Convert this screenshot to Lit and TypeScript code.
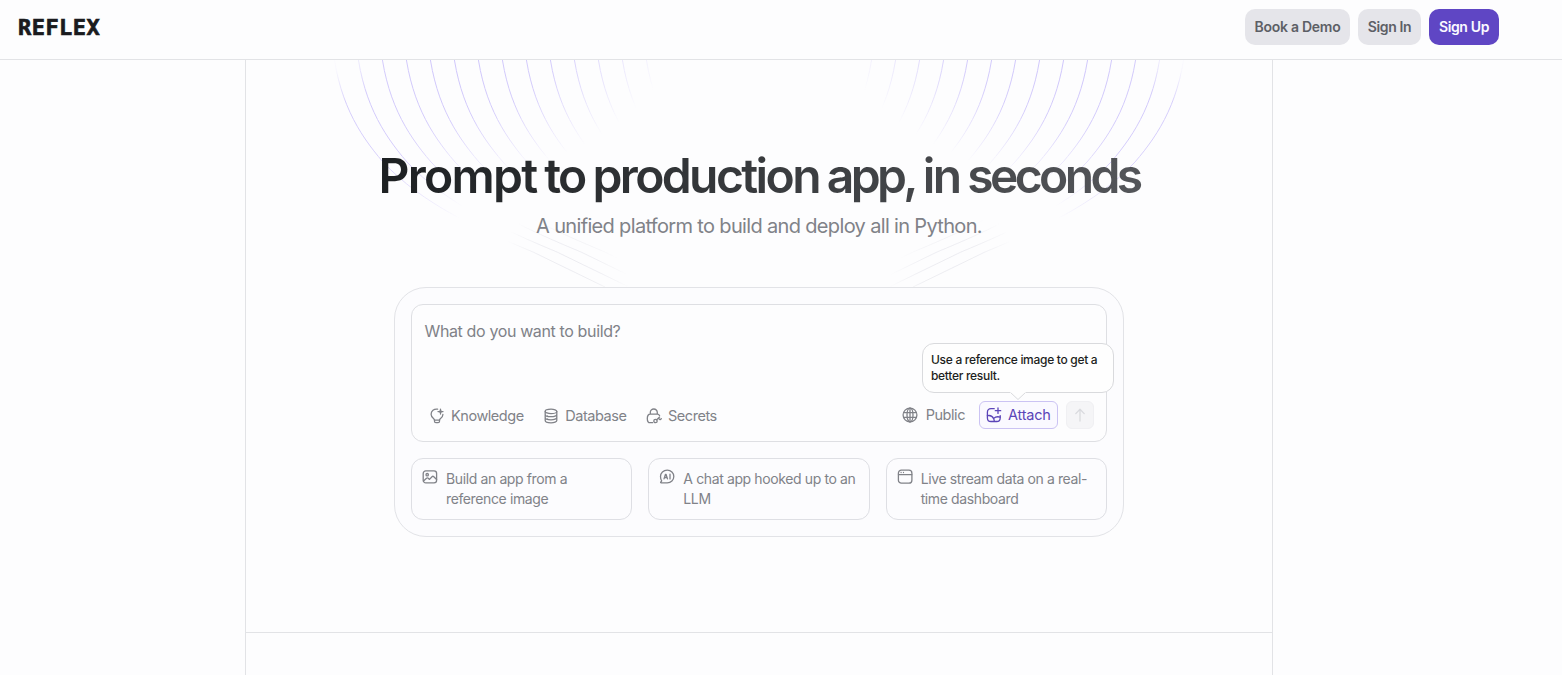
import { LitElement, html, css, svg } from "lit";
import { customElement } from "lit/decorators.js";

const icon = (body: unknown) => html`<svg class="icon" viewBox="0 0 16 16" width="16" height="16">${body}</svg>`;

const icons = {
  bulb: icon(svg`
    <path d="M8.6 1.2C4.9.7 2.100 3 2.100 6.200c0 2.100 1.100 3.400 2.600 4.600.5.4.7.8.7 1.300h5.200c0-.5.2-.9.7-1.300 1.500-1.200 2.600-2.500 2.600-4.400"/>
    <path d="M5.500 12.200v1c0 .9.6 1.500 1.400 1.500h2.200c.8 0 1.400-.6 1.400-1.500v-1"/>
    <path d="M11.500 1.100v5M9 3.600h5M11.500 2.400l1.200 1.200-1.200 1.200-1.200-1.200z"/>`),
  database: icon(svg`
    <ellipse cx="8" cy="3.400" rx="5.800" ry="2.200"/>
    <path d="M2.200 3.400v9.200c0 1.200 2.600 2.200 5.800 2.200s5.800-1 5.800-2.200V3.400M2.200 6.500c0 1.200 2.600 2.200 5.800 2.200s5.800-1 5.800-2.200M2.200 9.600c0 1.200 2.600 2.200 5.800 2.200s5.800-1 5.800-2.200M4.600 7.900v.1M4.600 11v.1"/>`),
  lock: icon(svg`
    <path d="M4.300 6.200V4.500a3.500 3.500 0 0 1 7 0v1.700M13.600 7.700c-.4-.9-1.100-1.500-2.300-1.500H4.300C2.400 6.200 1.300 7.900 1.300 10.400s.8 4.300 2.800 4.300h2.500"/>
    <circle cx="9.500" cy="13" r="1.700"/>
    <path d="M10.700 11.800l2.900-2.700M12.400 10.200l1.700 1.500 1.200-1"/>`),
  globe: icon(svg`
    <circle cx="8" cy="8" r="6.900"/><ellipse cx="8" cy="8" rx="3" ry="6.900"/>
    <path d="M1.600 5.600h12.800M1.600 10.400h12.800M8 1.100v13.800"/>`),
  addImage: icon(svg`
    <path d="M8.200 1.700H5C2.600 1.700 1.400 2.900 1.400 5.300v5.600c0 2.400 1.200 3.600 3.600 3.600h5.600c2.400 0 3.600-1.200 3.600-3.600V8.600"/>
    <path d="M1.400 8.700c2.800-.7 5.100.5 6.300 3 .3.700.5 1.600.6 2.600M7.600 11.400c1.900-1.700 4.200-2 6.600-1.300"/>
    <path d="M12 1v5.400M9.300 3.700h5.400"/>`),
  arrow: icon(svg`<path d="M8 14V2.500M3.800 6.600L8 2.300l4.200 4.300"/>`),
  image: icon(svg`
    <rect x="1.200" y="1.900" width="13.400" height="12" rx="2.600"/><circle cx="5.200" cy="5.700" r="1.200"/>
    <path d="M1.500 12l3-2.700c.6-.5 1.200-.5 1.800 0l1.200 1.100 2.500-2.700c.6-.6 1.200-.6 1.800 0l2.800 2.800"/>`),
  chat: icon(svg`
    <path d="M8.200 1.100c3.800 0 6.600 2.800 6.600 6.400s-2.800 6.400-6.600 6.400H2.200c-.6 0-.8-.5-.4-.9l.9-1.200C1.900 10.700 1.500 9.300 1.500 7.500c0-3.600 2.900-6.400 6.700-6.400z"/>
    <path d="M5 9.900l1.500-4.600h.5l1.500 4.600M5.500 8.500h2.500M11 5.200v4.700"/>`),
  browser: icon(svg`
    <rect x="1.400" y="1.200" width="13.500" height="13" rx="3"/><path d="M1.500 5.700h13.300M4.100 3.500v.1M6.500 3.500v.1"/>`),
};

const ARC = "M332 40C337 99 358 133 383 162C422 204 480 230 533 252L605 287";
const arcs = Array.from({ length: 14 }, (_, i) => i * 24);

const tools = [
  { icon: icons.bulb, label: "Knowledge" },
  { icon: icons.database, label: "Database" },
  { icon: icons.lock, label: "Secrets" },
];

const examples = [
  { icon: icons.image, label: "Build an app from a reference image" },
  { icon: icons.chat, label: "A chat app hooked up to an LLM" },
  { icon: icons.browser, label: "Live stream data on a real-time dashboard" },
];

@customElement("app-root")
class AppRoot extends LitElement {
  static styles = css`
    :host {
      display: block;
      height: 675px;
      overflow: hidden;
      background: #fdfdfe;
      color: #808288;
      font-family: Inter, "Liberation Sans", sans-serif;
    }
    * { box-sizing: border-box; }
    .page { display: flex; flex-direction: column; height: 100%; }
    .header {
      display: flex;
      flex: none;
      align-items: center;
      justify-content: space-between;
      height: 60px;
      padding: 0 63px 5px 18px;
      border-bottom: 1px solid #e2e3e6;
    }
    .logo {
      padding-top: 1px;
      font: 700 22px/24px "DejaVu Sans Mono", monospace;
      letter-spacing: 0.45px;
      color: #1a1b1e;
      -webkit-text-stroke: 0.7px #1a1b1e;
    }
    .nav { display: flex; gap: 8px; }
    .btn {
      display: flex;
      align-items: center;
      justify-content: center;
      height: 36px;
      padding-bottom: 2px;
      border-radius: 10px;
      background: #e5e5ea;
      color: #5d5f66;
      font-size: 14px;
      font-weight: 600;
      letter-spacing: -0.35px;
      white-space: nowrap;
    }
    .demo { width: 105px; letter-spacing: -0.28px; }
    .signin { width: 63px; }
    .signup { width: 70px; background: #5f46c4; color: #fbfaff; }
    .frame {
      flex: 1;
      width: 1028px;
      margin-left: 245px;
      border: solid #e2e3e6;
      border-width: 0 1px;
    }
    .hero {
      position: relative;
      display: flex;
      flex-direction: column;
      align-items: center;
      height: 573px;
      padding-top: 92px;
      border-bottom: 1px solid #e2e3e6;
    }
    .arcs { position: absolute; left: 0; top: 0; }
    .arcs path { fill: none; stroke: #cfc6fb; stroke-width: 1; }
    .arcs .low path { stroke: #ebebf0; }
    .title {
      position: relative;
      margin: 0;
      padding: 0 4px;
      font-size: 48px;
      line-height: 48px;
      height: 60px;
      font-weight: 600;
      letter-spacing: -2.6px;
      word-spacing: -1.8px;
      white-space: nowrap;
      color: transparent;
      background: linear-gradient(95deg, #1c1f21, #54565a);
      background-clip: text;
      -webkit-background-clip: text;
    }
    .loose { letter-spacing: -1.7px; }
    .snug { letter-spacing: -3.6px; }
    .subtitle {
      position: relative;
      margin: 0 0 47px;
      font-size: 20px;
      line-height: 28px;
      font-weight: 420;
      letter-spacing: -0.66px;
      white-space: nowrap;
    }
    .prompt {
      position: relative;
      display: flex;
      flex-direction: column;
      gap: 16px;
      width: 730px;
      height: 250px;
      padding: 16px;
      border: 1px solid #e2e3e7;
      border-radius: 32px;
      background: #fcfcfe;
    }
    .box {
      display: flex;
      flex-direction: column;
      justify-content: space-between;
      height: 138px;
      padding: 14px 12px 12px;
      border: 1px solid #dedfe3;
      border-radius: 12px;
      background: #fdfdfe;
    }
    .placeholder { font-size: 16px; line-height: 24px; letter-spacing: -0.37px; padding-left: 0.5px; }
    .bar { display: flex; align-items: center; height: 28px; font-size: 14.5px; letter-spacing: -0.45px; }
    .tools { display: flex; gap: 19.5px; padding: 1px 0 0 5px; }
    .tool { display: flex; align-items: center; gap: 6px; }
    .actions { display: flex; align-items: center; margin-left: auto; }
    .public { display: flex; align-items: center; gap: 8px; margin-right: 14px; }
    .label { padding-bottom: 1.5px; }
    .attach {
      position: relative;
      display: flex;
      align-items: center;
      gap: 6px;
      width: 79px;
      height: 28px;
      padding-left: 6px;
      border: 1px solid #cbc3f3;
      border-radius: 6px;
      background: #faf9ff;
      color: #5b45b8;
      letter-spacing: -0.2px;
    }
    .send {
      display: grid;
      place-items: center;
      width: 28px;
      height: 28px;
      margin-left: 8px;
      border: 1px solid #f0f0f3;
      border-radius: 6px;
      background: #f5f5f7;
      color: #d9dade;
    }
    .tip {
      position: absolute;
      left: -58px;
      top: -59px;
      width: 192px;
      height: 50px;
      padding: 8px;
      border: 1px solid #d9dadd;
      border-radius: 12px;
      background: #fefefe;
      color: #1d1e21;
      font-size: 12px;
      line-height: 16px;
      font-weight: 500;
      letter-spacing: -0.3px;
    }
    .point { position: absolute; left: 87px; top: 48px; fill: #fefefe; stroke: #d9dadd; }
    .cards { display: grid; grid-template-columns: repeat(3, 1fr); gap: 16px; height: 62px; }
    .card {
      display: flex;
      gap: 8px;
      padding: 10px 11px 10px 10px;
      border: 1px solid #dedfe4;
      border-radius: 12px;
      font-size: 14px;
      line-height: 20px;
      letter-spacing: -0.38px;
    }
    .icon { flex: none; fill: none; stroke: currentColor; stroke-width: 1.3; stroke-linecap: round; stroke-linejoin: round; }
    .card .icon { stroke-width: 1.3; }
  `;

  render() {
    const set = arcs.map((x) => svg`<path d=${ARC} transform="translate(${x} 0)"/>`);
    return html`
      <div class="page">
        <header class="header">
          <div class="logo">REFLEX</div>
          <nav class="nav">
            <div class="btn demo">Book a Demo</div>
            <div class="btn signin">Sign In</div>
            <div class="btn signup">Sign Up</div>
          </nav>
        </header>
        <main class="frame">
          <section class="hero">
            <svg class="arcs" viewBox="246 60 1026 228" width="1026" height="228">
              <defs>
                <radialGradient id="fade" gradientUnits="userSpaceOnUse" cx="0" cy="0" r="1"
                  gradientTransform="translate(458 66) rotate(-14) scale(228 120)">
                  <stop offset="0" stop-color="#fff"/>
                  <stop offset=".45" stop-color="#fff" stop-opacity=".9"/>
                  <stop offset="1" stop-color="#fff" stop-opacity="0"/>
                </radialGradient>
                <radialGradient id="fade2" gradientUnits="userSpaceOnUse" cx="0" cy="0" r="1"
                  gradientTransform="translate(388 150) rotate(46) scale(100 38)">
                  <stop offset="0" stop-color="#fff" stop-opacity=".9"/>
                  <stop offset="1" stop-color="#fff" stop-opacity="0"/>
                </radialGradient>
                <radialGradient id="corner" gradientUnits="userSpaceOnUse" cx="330" cy="50" r="55">
                  <stop offset="0" stop-color="#000"/>
                  <stop offset=".4" stop-color="#000" stop-opacity=".85"/>
                  <stop offset="1" stop-color="#000" stop-opacity="0"/>
                </radialGradient>
                <radialGradient id="fadeLow" gradientUnits="userSpaceOnUse" cx="0" cy="0" r="1"
                  gradientTransform="translate(568 262) rotate(27) scale(66 34)">
                  <stop offset="0" stop-color="#fff"/>
                  <stop offset=".5" stop-color="#fff" stop-opacity=".8"/>
                  <stop offset="1" stop-color="#fff" stop-opacity="0"/>
                </radialGradient>
                <mask id="m" maskUnits="userSpaceOnUse" x="246" y="60" width="513" height="228">
                  <rect x="246" y="60" width="513" height="228" fill="url(#fade)"/>
                  <rect x="246" y="60" width="513" height="228" fill="url(#fade2)"/>
                  <rect x="246" y="60" width="513" height="228" fill="url(#corner)"/>
                </mask>
                <mask id="mLow" maskUnits="userSpaceOnUse" x="246" y="60" width="513" height="228">
                  <rect x="246" y="60" width="513" height="228" fill="url(#fadeLow)"/>
                </mask>
                <g id="half">
                  <g mask="url(#m)">${set}</g>
                  <g class="low" mask="url(#mLow)">${set}</g>
                </g>
              </defs>
              <use href="#half"/>
              <use href="#half" transform="translate(1518 0) scale(-1 1)"/>
            </svg>
            <h1 class="title"><span class="loose">Prompt</span> to production <span class="snug">app,</span> in <span class="snug">seconds</span></h1>
            <p class="subtitle">A unified platform to build and deploy all in Python.</p>
            <div class="prompt">
              <div class="box">
                <div class="placeholder">What do you want to build?</div>
                <div class="bar">
                  <div class="tools">
                    ${tools.map((t) => html`<div class="tool">${t.icon}<span>${t.label}</span></div>`)}
                  </div>
                  <div class="actions">
                    <div class="public">${icons.globe}<span class="label">Public</span></div>
                    <div class="attach">
                      ${icons.addImage}<span class="label">Attach</span>
                      <div class="tip">
                        Use a reference image to get a better result.
                        <svg class="point" viewBox="0 0 16 9" width="16" height="9">
                          <path d="M0 .5H16" stroke="#fefefe"/><path d="M.5 .5L8 7.500L15.500 .5"/>
                        </svg>
                      </div>
                    </div>
                    <div class="send">${icons.arrow}</div>
                  </div>
                </div>
              </div>
              <div class="cards">
                ${examples.map((e) => html`<div class="card">${e.icon}<span>${e.label}</span></div>`)}
              </div>
            </div>
          </section>
        </main>
      </div>
    `;
  }
}
